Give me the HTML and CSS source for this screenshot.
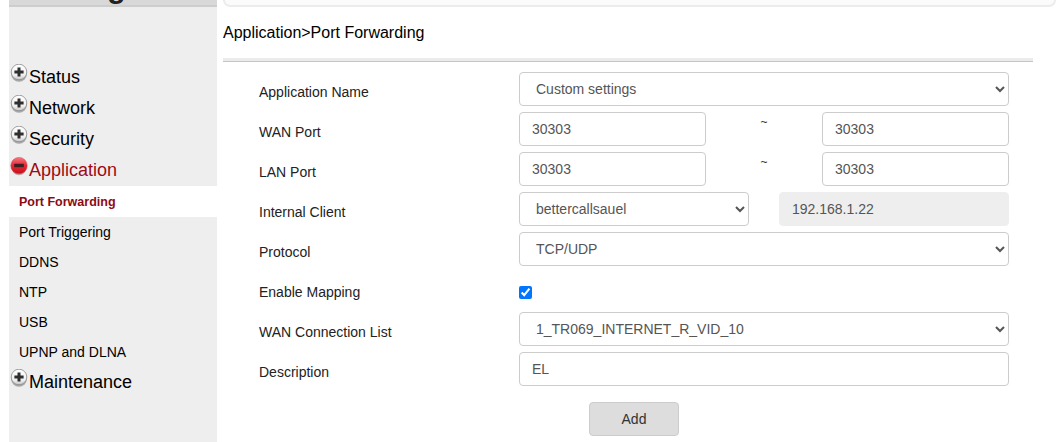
FILE: index.html
```html
<!DOCTYPE html>
<html lang="en">
<head>
<meta charset="utf-8">
<title>Port Forwarding</title>
<link rel="stylesheet" href="styles.css">
</head>
<body>
<div class="page">
  <aside class="sidebar">
    <div class="side-head"><span class="logo-tail">g</span></div>
    <nav class="menu">
      <a class="menu-item"><svg class="ico" viewBox="0 0 18 19"><use href="#plus"/></svg>Status</a>
      <a class="menu-item"><svg class="ico" viewBox="0 0 18 19"><use href="#plus"/></svg>Network</a>
      <a class="menu-item"><svg class="ico" viewBox="0 0 18 19"><use href="#plus"/></svg>Security</a>
      <a class="menu-item active"><svg class="ico" viewBox="0 0 18 19"><use href="#minus"/></svg>Application</a>
      <a class="sub current">Port Forwarding</a>
      <a class="sub">Port Triggering</a>
      <a class="sub">DDNS</a>
      <a class="sub">NTP</a>
      <a class="sub">USB</a>
      <a class="sub">UPNP and DLNA</a>
      <a class="menu-item"><svg class="ico" viewBox="0 0 18 19"><use href="#plus"/></svg>Maintenance</a>
    </nav>
  </aside>
  <main class="main">
    <div class="top-card"></div>
    <h1 class="crumb">Application&gt;Port Forwarding</h1>
    <div class="rule"></div>
    <form class="form">
      <div class="row"><label class="lbl">Application Name</label><select class="ctl sel grow"><option>Custom settings</option></select></div>
      <div class="row"><label class="lbl">WAN Port</label><input class="ctl port" value="30303"><span class="tilde">~</span><input class="ctl port" value="30303"></div>
      <div class="row"><label class="lbl">LAN Port</label><input class="ctl port" value="30303"><span class="tilde">~</span><input class="ctl port" value="30303"></div>
      <div class="row"><label class="lbl">Internal Client</label><select class="ctl sel client"><option>bettercallsauel</option></select><input class="ctl ip" value="192.168.1.22" disabled></div>
      <div class="row"><label class="lbl">Protocol</label><select class="ctl sel grow"><option>TCP/UDP</option></select></div>
      <div class="row"><label class="lbl">Enable Mapping</label><input class="check" type="checkbox" checked></div>
      <div class="row"><label class="lbl">WAN Connection List</label><select class="ctl sel grow"><option>1_TR069_INTERNET_R_VID_10</option></select></div>
      <div class="row"><label class="lbl">Description</label><input class="ctl grow" value="EL"></div>
      <div class="actions"><button class="btn" type="button">Add</button></div>
    </form>
  </main>
</div>
<svg class="defs" width="0" height="0" aria-hidden="true">
  <defs>
    <linearGradient id="gs" x1="0" y1="0" x2="0" y2="1"><stop offset="0" stop-color="#ffffff"/><stop offset=".7" stop-color="#f0f0f0"/><stop offset="1" stop-color="#c4c4c4"/></linearGradient>
    <linearGradient id="gr" x1="0" y1="0" x2="0" y2="1"><stop offset="0" stop-color="#f57a82"/><stop offset=".45" stop-color="#ea2a36"/><stop offset="1" stop-color="#c40f1c"/></linearGradient>
    <symbol id="plus" viewBox="0 0 18 19">
      <ellipse cx="9" cy="10" rx="7.8" ry="7.8" fill="#a8a8a8"/>
      <circle cx="9" cy="8" r="7.8" fill="url(#gs)" stroke="#8c8c8c" stroke-width=".8"/>
      <path d="M7.5 3.4h3v3.1h3.1v3h-3.1v3.1h-3V9.5H4.4v-3h3.1z" fill="#2e2e2e"/>
    </symbol>
    <symbol id="minus" viewBox="0 0 18 19">
      <ellipse cx="9" cy="10.6" rx="7.6" ry="7.6" fill="#c0a8a8"/>
      <circle cx="9" cy="8.6" r="8.2" fill="url(#gr)" stroke="#d0404a" stroke-width=".5"/>
      <rect x="4.2" y="6.8" width="9.6" height="3.4" fill="#3a2022"/>
    </symbol>
  </defs>
</svg>
</body>
</html>
```
FILE: styles.css
```css
* { box-sizing: border-box; }
html, body { margin: 0; height: 100%; overflow: hidden; background: #fff; }
body { font-family: "Liberation Sans", Arial, sans-serif; color: #000; }
.page { display: flex; height: 442px; padding-left: 9px; }
.sidebar { width: 208px; background: #eee; flex: none; }
.side-head { height: 7px; background: #d8d8d8; border-bottom: 2px solid #cdcdcd; overflow: hidden; text-align: center; }
.logo-tail { display: block; font-size: 30px; line-height: 16px; margin-top: -20px; margin-left: 7px; color: #222; font-weight: bold; }
.menu { display: flex; flex-direction: column; padding-top: 55px; }
.menu-item { display: flex; height: 31px; font-size: 18px; line-height: 31px; padding-left: 1px; color: #000; }
.menu-item.active { color: #a00a14; }
.ico { width: 18px; height: 19px; flex: none; margin: 2px 1px 0 0; }
.sub { display: block; height: 30px; line-height: 30px; font-size: 14px; padding-left: 10px; color: #000; }
.sub.current { height: 31px; line-height: 33px; background: #fff; color: #8c0a14; font-weight: bold; font-size: 12.5px; }
.main { flex: 1; padding-left: 6px; min-width: 0; }
.top-card { width: 833px; height: 7px; background: #fbfbfb; border: 2px solid #ececec; border-top: 0; border-radius: 0 0 8px 8px; }
.crumb { margin: 0; font-weight: normal; font-size: 16px; line-height: 20px; padding-top: 16px; height: 51px; }
.rule { width: 810px; height: 4px; background: #ebebeb; border-bottom: 1px solid #c6c6c6; }
.form { width: 786px; padding: 10px 0 0 36px; }
.row { display: flex; align-items: center; height: 34px; margin-bottom: 6px; }
.lbl { width: 260px; flex: none; font-size: 14px; line-height: 20px; padding-top: 5px; color: #222; }
.ctl { height: 34px; font: 14px "Liberation Sans", Arial, sans-serif; color: #555; border: 1px solid #ccc; border-radius: 4px; background: #fff; padding: 0 12px; outline: 0; }
.sel { padding-left: 12px; }
.grow { width: 490px; flex: none; }
.port { width: 187px; flex: none; }
.tilde { width: 116px; flex: none; text-align: center; font-size: 12px; line-height: 14px; margin-top: -15px; color: #333; }
.client { width: 230px; flex: none; }
.ip { width: 230px; flex: none; margin-left: 30px; background: #eee; border-color: #eee; }
.check { width: 13px; height: 13px; margin: 6px 0 0 0; accent-color: #0075ff; }
.actions { padding: 10px 0 0 330px; }
.btn { width: 90px; height: 34px; font: 14px "Liberation Sans", Arial, sans-serif; color: #333; background: #ddd; border: 1px solid #ccc; border-radius: 4px; }
.defs { position: absolute; }
```
